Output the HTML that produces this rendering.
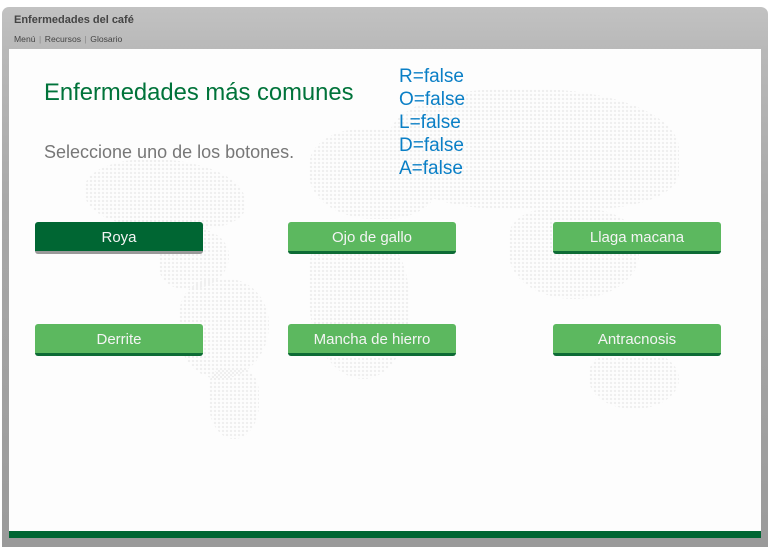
<!DOCTYPE html>
<html><head><meta charset="utf-8"><style>
*{margin:0;padding:0;box-sizing:border-box}
body{width:772px;height:547px;background:#fff;position:relative;overflow:hidden;font-family:"Liberation Sans",Arial,sans-serif}
.frame{position:absolute;left:2px;top:7px;width:766px;height:540px;border-radius:7px 7px 0 0;background:linear-gradient(#c2c2c2,#b8b8b8 45px,#a8a8a8 200px,#9a9a9a)}
.title{position:absolute;left:14px;top:14px;font-size:11px;font-weight:bold;color:#444}
.menu{position:absolute;left:14px;top:34px;font-size:8.6px;color:#444}
.menu span{color:#888;margin:0 3.5px}
.content{position:absolute;left:9px;top:49px;width:752px;height:482px;background:#fdfdfd;overflow:hidden}
.bar{position:absolute;left:9px;top:531px;width:752px;height:7px;background:#006633}
.map{position:absolute;background-image:radial-gradient(circle,#efefef 1.1px,transparent 1.3px);background-size:4px 4px}
h1{position:absolute;left:44px;top:79px;font-size:23.8px;font-weight:normal;color:#00733a}
.sub{position:absolute;left:44px;top:142px;font-size:18px;color:#777}
.vars{position:absolute;left:399px;top:65px;font-size:19px;line-height:23px;color:#0a7fc6}
.btn{position:absolute;width:168px;height:32px;border-radius:3px;background:#5cb85f;border-bottom:3px solid #0d6b35;color:#f4f4f4;font-size:15px;text-align:center;line-height:31px}
.btn.on{background:#006633;border-bottom:3px solid #999}
</style></head><body>
<div class="frame"></div>
<div class="title">Enfermedades del café</div>
<div class="menu">Menú<span>|</span>Recursos<span>|</span>Glosario</div>
<div class="content">
<div class="map" style="left:76px;top:110px;width:160px;height:70px;border-radius:40% 60% 30% 50%"></div>
<div class="map" style="left:150px;top:180px;width:70px;height:60px;border-radius:30% 50% 60% 40%"></div>
<div class="map" style="left:170px;top:230px;width:90px;height:100px;border-radius:40% 50% 60% 50%"></div>
<div class="map" style="left:200px;top:320px;width:50px;height:70px;border-radius:30% 40% 60% 60%"></div>
<div class="map" style="left:300px;top:80px;width:130px;height:90px;border-radius:40% 50% 40% 50%"></div>
<div class="map" style="left:380px;top:40px;width:290px;height:120px;border-radius:40% 50% 30% 40%"></div>
<div class="map" style="left:300px;top:180px;width:100px;height:150px;border-radius:30% 50% 50% 60%"></div>
<div class="map" style="left:500px;top:160px;width:130px;height:90px;border-radius:30% 40% 50% 50%"></div>
<div class="map" style="left:580px;top:300px;width:90px;height:60px;border-radius:40% 50% 50% 50%"></div>
</div>
<div class="bar"></div>
<h1>Enfermedades más comunes</h1>
<div class="sub">Seleccione uno de los botones.</div>
<div class="vars">R=false<br>O=false<br>L=false<br>D=false<br>A=false</div>
<div class="btn on" style="left:35px;top:222px">Roya</div>
<div class="btn" style="left:288px;top:222px">Ojo de gallo</div>
<div class="btn" style="left:553px;top:222px">Llaga macana</div>
<div class="btn" style="left:35px;top:324px">Derrite</div>
<div class="btn" style="left:288px;top:324px">Mancha de hierro</div>
<div class="btn" style="left:553px;top:324px">Antracnosis</div>
</body></html>
